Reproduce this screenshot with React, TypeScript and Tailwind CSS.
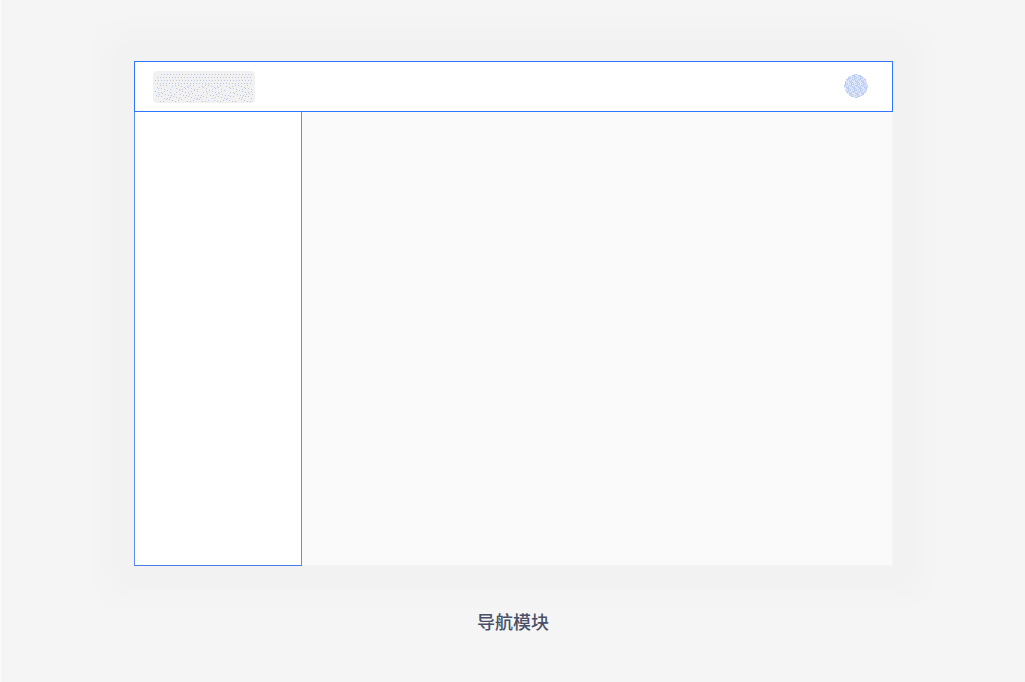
import React from "react";

function Dots() {
  const dots: React.ReactElement[] = [];
  for (let r = 0; r < 10; r++) {
    const y = 3 + r * 2.9;
    const shift = r < 4 ? (r % 2) * 1.5 : (Math.sin(r * 1.7) + 1) * 1.5;
    for (let c = 0; c < 33; c++) {
      const wob = r < 4 ? 0 : Math.sin(c * 1.3 + r * 2.1) * 1.1;
      const x = 2 + shift + c * 3;
      if (x > 99) continue;
      if (r < 1 && x < 6) continue;
      if (r >= 4 && (r * 7 + c * 11) % 9 === 0) continue;
      dots.push(
        <rect
          key={`${r}-${c}`}
          x={Math.round(x)}
          y={Math.round(y + wob)}
          width={1}
          height={1}
          fill={(r * 3 + c * 5) % 7 < 3 ? "#b5cbf7" : "#c4c4ce"}
        />
      );
    }
  }
  return (
    <svg width="102" height="32" viewBox="0 0 102 32" className="absolute inset-0" shapeRendering="crispEdges">
      {dots}
    </svg>
  );
}

function Globe() {
  const cells: React.ReactElement[] = [];
  for (let y = 0; y < 24; y++) {
    for (let x = 0; x < 24; x++) {
      if ((x - 11.5) ** 2 + (y - 11.5) ** 2 > 138) continue;
      const on = (x * 2 + y * 3 + ((x * y) % 3)) % 4 < 2;
      cells.push(<rect key={`${x}-${y}`} x={x} y={y} width={1} height={1} fill={on ? "#bccef4" : "#dfe7f9"} />);
    }
  }
  return (
    <svg width="24" height="24" viewBox="0 0 24 24" shapeRendering="crispEdges" className="-mt-[1px]">
      {cells}
    </svg>
  );
}

export default function App() {
  return (
    <div
      className="flex h-[682px] w-full flex-col bg-[#f5f5f5] pt-[61px] pl-[133px] pr-[132px] border-l border-l-[#fbfbfb]"
      style={{ fontFamily: '"Noto Sans CJK SC", "Liberation Sans", sans-serif' }}
    >
      <div className="flex h-[505px] w-full flex-col shadow-[0_0_30px_32px_rgba(0,0,0,0.014)]">
        <header className="flex h-[51px] shrink-0 items-center justify-between border-x border-y border-x-[#2f75ff] border-y-[#2f75ff] bg-white pl-[18px] pr-[24px]">
          <div className="relative h-[32px] w-[102px] rounded-[4px] bg-[#f1f1f1]">
            <Dots />
          </div>
          <Globe />
        </header>
        <div className="flex min-h-0 flex-1">
          <aside className="h-full w-[168px] border-x border-b border-x-[#5b8ef8] border-b-[#4a7de6] bg-white" />
          <main className="mb-[1px] mr-[1px] flex-1 bg-[#fafafa]" />
        </div>
      </div>
      <p className="mt-[43px] -ml-[1px] text-center text-[18px] leading-[24px] font-medium text-[#4a5068]">导航模块</p>
    </div>
  );
}
